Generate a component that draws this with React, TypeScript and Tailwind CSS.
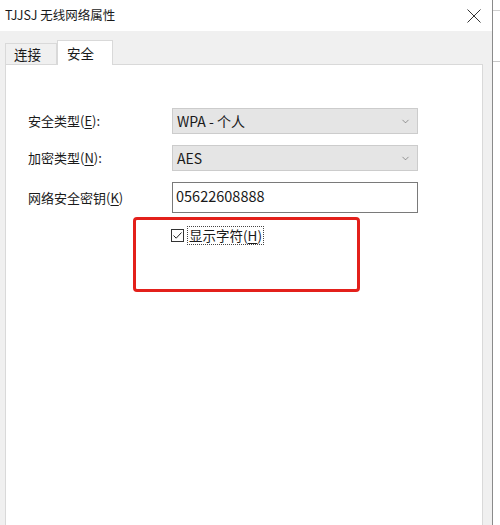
import { ChevronDown } from 'lucide-react';

const font = { fontFamily: '"Noto Sans CJK SC", "Noto Sans", sans-serif' };

function Select({ value }: { value: string }) {
  return (
    <div className="w-[246px] h-[26px] flex items-center justify-between pl-[4px] pr-[6px] bg-[#e5e5e5] border border-[#cccccc] text-[14px] text-[#1a1a1a]">
      <span>{value}</span>
      <ChevronDown size={11} strokeWidth={1.25} className="text-[#555]" />
    </div>
  );
}

export default function App() {
  return (
    <div className="w-[500px] h-[525px] flex bg-white overflow-hidden text-[#1a1a1a]" style={font}>
      <div className="w-[492px] flex flex-col shrink-0">
        {/* Title bar */}
        <div className="h-[31px] bg-white flex items-center justify-between pl-[5px] pr-[10px]">
          <span className="text-[12.5px]">TJJSJ 无线网络属性</span>
          <svg width="16" height="16" viewBox="0 0 16 16" className="text-[#333]">
            <path d="M1.5 1.5 L14.5 14.5 M14.5 1.5 L1.5 14.5" stroke="currentColor" strokeWidth="1" fill="none" />
          </svg>
        </div>

        {/* Body */}
        <div className="flex-1 bg-[#f0f0f0] flex flex-col pl-[5px] pr-[9px] pt-[9px]">
          <div className="flex items-end h-[24px]">
            <div className="w-[52px] h-[22px] mb-[-1px] border border-b-0 border-[#d9d9d9] bg-[#f0f0f0] flex items-center pl-[8px] text-[13.5px]">
              连接
            </div>
            <div className="relative z-10 w-[56px] h-[25px] mb-[-1px] border border-b-0 border-[#d9d9d9] bg-white flex items-start pt-[2px] pl-[9px] text-[13.5px]">
              安全
            </div>
          </div>
          <div className="flex-1 bg-white border border-[#d9d9d9] border-b-0 pt-[43px] pl-[22px]">
            <div className="flex flex-col gap-[11px]">
              <div className="flex items-center">
                <span className="w-[144px] text-[13px]">
                  安全类型(<span className="underline underline-offset-2">E</span>):
                </span>
                <Select value="WPA - 个人" />
              </div>
              <div className="flex items-center">
                <span className="w-[144px] text-[13px]">
                  加密类型(<span className="underline underline-offset-2">N</span>):
                </span>
                <Select value="AES" />
              </div>
              <div className="flex items-center">
                <span className="w-[144px] text-[13px]">
                  网络安全密钥(<span className="underline underline-offset-2">K</span>)
                </span>
                <div className="w-[246px] h-[31px] bg-white border border-[#7a7a7a] flex items-start pl-[3px] pt-[2px] text-[14.5px]">
                  05622608888
                </div>
              </div>
            </div>
            <div className="ml-[105px] mt-[4px] w-[227px] h-[75px] border-[3px] border-[#e3201b] rounded-[4px] pl-[35px] pt-[6px]">
              <div className="flex items-center gap-[3px]">
                <div className="w-[13px] h-[13px] border border-[#333] bg-white flex items-center justify-center">
                  <svg width="11" height="11" viewBox="0 0 11 11">
                    <path d="M1.5 5.5 L4.2 8.2 L9.5 2.5" stroke="#222" strokeWidth="1" fill="none" />
                  </svg>
                </div>
                <span className="border border-dotted border-[#444] px-[1px] text-[13.5px] leading-[17px]">
                  显示字符(<span className="underline underline-offset-2">H</span>)
                </span>
              </div>
            </div>
          </div>
        </div>
      </div>
      <div className="w-px bg-[#8a8a8a] shrink-0" />
      <div className="flex-1 flex flex-col pt-[10px]">
        <div className="h-px bg-[#d0d0d0]" />
        <div className="h-[50px]" />
        <div className="h-px bg-[#c8c8c8]" />
      </div>
    </div>
  );
}
